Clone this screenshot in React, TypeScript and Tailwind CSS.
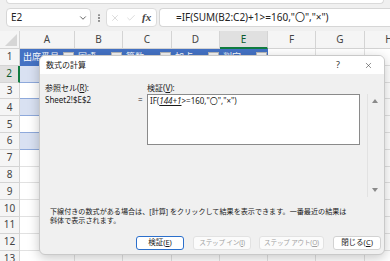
import React from 'react';
import { ChevronDown, EllipsisVertical, X, Check } from 'lucide-react';

const columns = [
  { letter: 'A', w: 'w-[55px]' },
  { letter: 'B', w: 'w-[48px]' },
  { letter: 'C', w: 'w-[49px]' },
  { letter: 'D', w: 'w-[48px]' },
  { letter: 'E', w: 'w-[48px]' },
  { letter: 'F', w: 'w-[48px]' },
  { letter: 'G', w: 'w-[49px]' },
  { letter: 'H', w: 'w-[49px]' },
];

const heads = ['出席番号', '国語', '算数', '加点', '判定'];

const rows = Array.from({ length: 13 }, (_, i) => i + 1);

const FilterButton = () => (
  <div className="ml-auto mt-[3px] flex h-[10px] w-[11px] shrink-0 items-center justify-center self-start border border-[#b9b9b9] bg-[#f3f3f3]">
    <svg width="5" height="3" viewBox="0 0 5 3">
      <path d="M0 0h5L2.5 3z" fill="#555" />
    </svg>
  </div>
);

const cellClass = (row: number, col: number) => {
  if (row === 1 && col < 5) return 'bg-[#4472c4] border-b border-[#4472c4]';
  if (row >= 2 && row <= 6 && col < 5) {
    return row % 2 === 0
      ? 'bg-[#d9e1f2] border-b border-[#8ea9db]'
      : 'bg-white border-b border-[#8ea9db]';
  }
  return 'bg-white border-b border-r border-[#e1e1e1]';
};

const Sheet = () => (
  <div className="flex flex-col">
    {/* column headers */}
    <div className="flex h-[18px]">
      <div className="relative w-[20px] shrink-0 border-b border-r border-[#d4d4d4] bg-[#f5f5f5]">
        <svg className="absolute bottom-[2px] right-[2px]" width="12" height="12" viewBox="0 0 12 12">
          <path d="M12 0V12H0z" fill="#d6d6d6" />
        </svg>
      </div>
      {columns.map((c) => (
        <div
          key={c.letter}
          className={`${c.w} flex shrink-0 items-center justify-center border-r text-[10px] ${
            c.letter === 'E'
              ? 'border-b-2 border-b-[#107c41] border-r-[#d4d4d4] bg-[#e0e0e0] text-[#0b5a2e]'
              : 'border-b border-[#d4d4d4] bg-[#f5f5f5] text-[#444]'
          }`}
        >
          {c.letter}
        </div>
      ))}
    </div>
    {rows.map((r) => (
      <div key={r} className="flex h-[16.8px]">
        <div
          className={`flex w-[20px] shrink-0 items-center justify-center border-b text-[10px] ${
            r === 2
              ? 'border-r-2 border-b-[#d4d4d4] border-r-[#107c41] bg-[#e0e0e0] text-[#0b5a2e]'
              : 'border-r border-[#d4d4d4] bg-[#f5f5f5] text-[#444]'
          }`}
        >
          {r}
        </div>
        {columns.map((c, ci) => (
          <div key={c.letter} className={`${c.w} ${cellClass(r, ci)} flex shrink-0 items-center overflow-hidden pl-[3px] pr-[1px]`}>
            {r === 1 && ci < 5 && (
              <>
                <span className="whitespace-nowrap text-[9px] leading-none text-white">{heads[ci]}</span>
                <FilterButton />
              </>
            )}
          </div>
        ))}
      </div>
    ))}
  </div>
);

const FormulaBar = () => (
  <div className="flex h-[31px] flex-col bg-[#f0f0f0]">
    <div className="mx-[6px] h-[4px] rounded-b-[4px] border-x border-b border-[#dadada] bg-white" />
    <div className="mt-[4px] flex h-[19px] items-center pl-[6px]">
      <div className="flex h-full w-[85px] items-center justify-between rounded-[4px] border border-[#d6d6d6] bg-white pl-[4px] pr-[2px]">
        <span className="text-[10px] text-[#222]">E2</span>
        <ChevronDown size={10} strokeWidth={2} color="#444" />
      </div>
      <div className="mx-[2px] flex w-[11px] justify-center">
        <EllipsisVertical size={10} strokeWidth={2.5} color="#666" />
      </div>
      <div className="flex h-full w-[51px] items-center rounded-[4px] border border-[#dcdcdc] bg-white pl-[3px]">
        <X size={10} strokeWidth={1.3} color="#bdbdbd" />
        <Check size={10} strokeWidth={1.3} color="#bdbdbd" className="ml-[6px]" />
        <span className="ml-[6px] font-['Liberation_Serif'] text-[11px] font-bold italic text-[#444]">fx</span>
      </div>
      <div className="ml-[2px] flex h-full flex-1 items-center rounded-l-[4px] border-y border-l border-[#d6d6d6] bg-white pl-[16px]">
        <span className="whitespace-nowrap text-[10px] text-[#222]">=IF(SUM(B2:C2)+1&gt;=160,"〇","×")</span>
      </div>
    </div>
  </div>
);

const Button = ({
  children,
  w,
  primary,
  disabled,
}: {
  children: React.ReactNode;
  w: string;
  primary?: boolean;
  disabled?: boolean;
}) => (
  <div
    className={`${w} flex h-[14px] shrink-0 items-center justify-center whitespace-nowrap rounded-[3px] leading-none ${
      primary
        ? 'border-[1.5px] border-[#2b6fcb] bg-white text-[7.5px] text-[#1a1a1a]'
        : disabled
        ? 'border border-[#e2e2e2] bg-[#fbfbfb] text-[6.6px] tracking-[-0.2px] text-[#a0a0a0]'
        : 'border border-[#d2d2d2] bg-white text-[7.5px] text-[#1a1a1a]'
    }`}
  >
    {children}
  </div>
);

const EvaluateDialog = () => (
  <div className="absolute left-[39px] top-[55px] flex h-[200px] w-[346px] flex-col overflow-hidden rounded-[6px] border border-[#c9c9c9] bg-[#f0f0f0] text-[#1a1a1a] shadow-[0_3px_12px_rgba(0,0,0,0.22)]">
    <div className="flex h-[18px] shrink-0 items-center bg-white pl-[6px]">
      <span className="text-[8px]">数式の計算</span>
      <span className="ml-auto text-[9px] text-[#333]">?</span>
      <X size={9} strokeWidth={1.4} color="#333" className="ml-[24px] mr-[11px]" />
    </div>
    <div className="flex flex-1 flex-col pt-[9px]">
      <div className="flex h-[114px] shrink-0">
        <div className="w-[98px] pl-[5px] text-[8px] leading-[10px]">
          <div>
            参照セル(<span className="underline">R</span>):
          </div>
          <div className="mt-[2px]">Sheet2!$E$2</div>
        </div>
        <div className="mt-[12px] w-[9px] text-[8px] leading-[10px]">=</div>
        <div className="flex flex-col">
          <div className="text-[8px] leading-[10px]">
            検証(<span className="underline">V</span>):
          </div>
          <div className="mt-[1px] h-[51px] w-[213px] border border-[#8a8a8a] bg-white pl-[2px] pt-[1px] text-[8px] leading-[10px]">
            IF(<span className="italic underline">144+1</span>&gt;=160,"〇","×")
          </div>
        </div>
        <div className="ml-[7px] mt-[11px] flex h-[103px] w-[14px] flex-col items-center justify-between border-l border-[#e2e2e2] py-[5px]">
          <svg width="6" height="4" viewBox="0 0 6 4">
            <path d="M3 0L6 4H0z" fill="#8a8a8a" />
          </svg>
          <svg width="6" height="4" viewBox="0 0 6 4">
            <path d="M0 0h6L3 4z" fill="#8a8a8a" />
          </svg>
        </div>
      </div>
      <div className="mt-[10px] whitespace-nowrap pl-[10px] text-[7.1px] leading-[9px]">
        <div>下線付きの数式がある場合は、[計算] をクリックして結果を表示できます。一番最近の結果は</div>
        <div>斜体で表示されます。</div>
      </div>
      <div className="mt-[11px] flex pl-[96px]">
        <Button w="w-[48px]" primary>
          検証(<span className="underline">E</span>)
        </Button>
        <div className="ml-[9px]">
          <Button w="w-[58px]" disabled>
            ステップ イン(<span className="underline">I</span>)
          </Button>
        </div>
        <div className="ml-[8px]">
          <Button w="w-[65px]" disabled>
            ステップ アウト(<span className="underline">O</span>)
          </Button>
        </div>
        <div className="ml-[9px]">
          <Button w="w-[48px]">
            閉じる(<span className="underline">C</span>)
          </Button>
        </div>
      </div>
    </div>
  </div>
);

export default function App() {
  return (
    <div className="relative h-[261px] w-[390px] overflow-hidden bg-white [font-family:'Noto_Sans','Noto_Sans_CJK_JP',sans-serif]">
      <FormulaBar />
      <Sheet />
      <EvaluateDialog />
    </div>
  );
}
